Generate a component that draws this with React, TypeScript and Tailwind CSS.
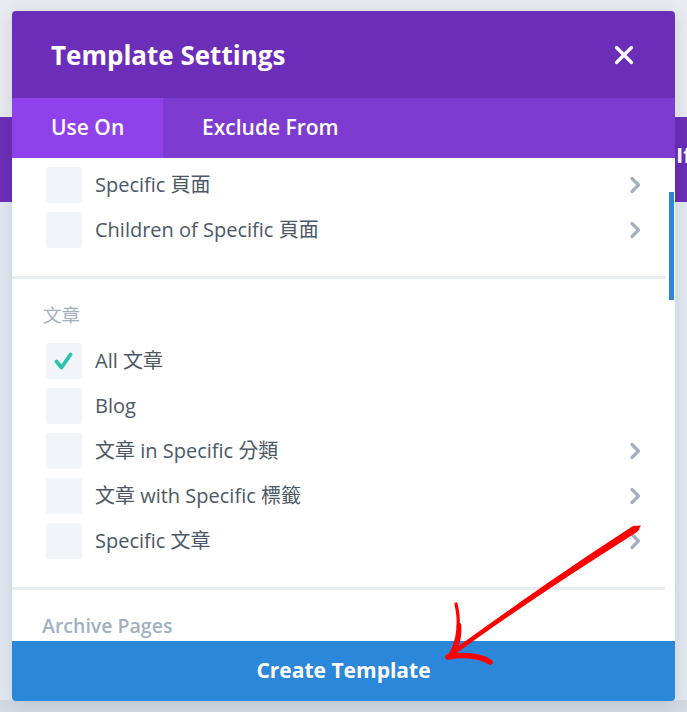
import React from "react";

type Item = { label: string; checked?: boolean; more?: boolean };

const pageItems: Item[] = [
  { label: "Specific 頁面", more: true },
  { label: "Children of Specific 頁面", more: true },
];

const postItems: Item[] = [
  { label: "All 文章", checked: true },
  { label: "Blog" },
  { label: "文章 in Specific 分類", more: true },
  { label: "文章 with Specific 標籤", more: true },
  { label: "Specific 文章", more: true },
];

function Chevron() {
  return (
    <svg width="12" height="18" viewBox="0 0 12 18" fill="none">
      <path
        d="M3 2.5 L9.5 9 L3 15.5"
        stroke="#a2b0c1"
        strokeWidth="3.2"
        strokeLinecap="round"
        strokeLinejoin="round"
      />
    </svg>
  );
}

function Check() {
  return (
    <svg width="20" height="20" viewBox="0 0 20 20" fill="none">
      <path
        d="M2.5 10.5 L7.5 16.5 L16.5 3.5"
        stroke="#29c4a9"
        strokeWidth="3.8"
        strokeLinecap="round"
        strokeLinejoin="round"
      />
    </svg>
  );
}

function Row({ item }: { item: Item }) {
  return (
    <div className="flex items-center h-[36px] mb-[9px] last:mb-0">
      <div className="w-[36px] h-[36px] rounded-[3px] bg-[#f1f5f9] flex items-center justify-center shrink-0">
        {item.checked && <Check />}
      </div>
      <span className="ml-[13px] text-[20px] leading-[26px] text-[#4c5866]">
        {item.label}
      </span>
      {item.more && (
        <div className="ml-auto mr-[24px] flex items-center">
          <Chevron />
        </div>
      )}
    </div>
  );
}

function CloseIcon() {
  return (
    <svg width="20" height="20" viewBox="0 0 20 20" fill="none">
      <path
        d="M2.5 2.5 L17.5 17.5 M17.5 2.5 L2.5 17.5"
        stroke="#ffffff"
        strokeWidth="3.2"
        strokeLinecap="round"
      />
    </svg>
  );
}

function RedArrow() {
  return (
    <svg
      className="absolute left-0 top-0 pointer-events-none"
      width="687"
      height="712"
      viewBox="0 0 687 712"
      fill="none"
    >
      {/* shaft, thicker at the tail */}
      <path
        d="M641 525.5 L637 532 C582 567 502 618 451 656 L446 657 C497 617 577 562 633 526 Z"
        fill="#ff0000"
      />
      <path
        d="M637 528.5 C585 562 505 614 449 656"
        stroke="#ff0000"
        strokeWidth="4.5"
        strokeLinecap="round"
      />
      {/* head, upper stroke */}
      <path
        d="M456 604 C460 620 459 640 450 655"
        stroke="#ff0000"
        strokeWidth="3.2"
        strokeLinecap="round"
      />
      <path
        d="M459 625 C460 638 457 648 450 656"
        stroke="#ff0000"
        strokeWidth="4.5"
        strokeLinecap="round"
      />
      {/* head, lower stroke */}
      <path
        d="M448 657 C465 654 480 656 490 662"
        stroke="#ff0000"
        strokeWidth="5.5"
        strokeLinecap="round"
      />
    </svg>
  );
}

export default function App() {
  return (
    <div className="relative w-[687px] h-[712px] overflow-hidden font-['Open_Sans','Noto_Sans_CJK_TC',sans-serif]">
      {/* builder page behind the modal */}
      <div className="flex flex-col h-full">
        <div className="h-[117px] bg-[#e8ecf0]" />
        <div className="h-[85px] bg-[#6c2eb9] flex items-start pt-[26px]">
          <span className="ml-[676px] text-white text-[22px] font-bold leading-none whitespace-nowrap">
            Ift
          </span>
        </div>
        <div className="flex-1 bg-[#e3e9f2]" />
        <div className="h-[12px] bg-[#d5dbe3]" />
      </div>

      {/* modal */}
      <div className="absolute left-[12px] top-[11px] w-[663px] rounded-[4px] overflow-hidden flex flex-col bg-white shadow-[0_4px_20px_rgba(0,0,0,0.12)]">
        <div className="h-[87px] bg-[#6c2eb9] flex items-center justify-between pl-[39px] pr-[41px]">
          <h2 className="text-white text-[26px] font-bold leading-none">
            Template Settings
          </h2>
          <CloseIcon />
        </div>

        <div className="h-[60px] bg-[#7e3bd0] flex">
          <div className="w-[151px] bg-[#8f42ec] flex items-center pl-[39px]">
            <span className="text-white text-[21px] font-semibold">Use On</span>
          </div>
          <div className="flex items-center pl-[39px]">
            <span className="text-white text-[21px] font-semibold">
              Exclude From
            </span>
          </div>
        </div>

        <div className="relative h-[483px] overflow-hidden">
          <div className="w-[653px]">
            <div className="pt-[9px] pb-[28px] pl-[34px]">
              {pageItems.map((it) => (
                <Row key={it.label} item={it} />
              ))}
            </div>
            <div className="h-[3px] bg-[#e6ecf2]" />
            <div className="pt-[23px] pb-[28px] pl-[34px]">
              <div className="text-[18.5px] leading-[26px] text-[#a2b0c1] -ml-[3px] mb-[15px]">
                文章
              </div>
              {postItems.map((it) => (
                <Row key={it.label} item={it} />
              ))}
            </div>
            <div className="h-[3px] bg-[#e6ecf2]" />
            <div className="pt-[23px] pl-[30px]">
              <div className="text-[19.5px] leading-[26px] font-semibold text-[#a2b0c1]">
                Archive Pages
              </div>
            </div>
          </div>
          {/* scrollbar thumb */}
          <div className="absolute right-[1px] top-[34px] w-[5px] h-[108px] bg-[#2b87da]" />
        </div>

        <button className="h-[60px] bg-[#2b87da] text-white text-[21px] font-bold">
          Create Template
        </button>
      </div>

      <RedArrow />
    </div>
  );
}
